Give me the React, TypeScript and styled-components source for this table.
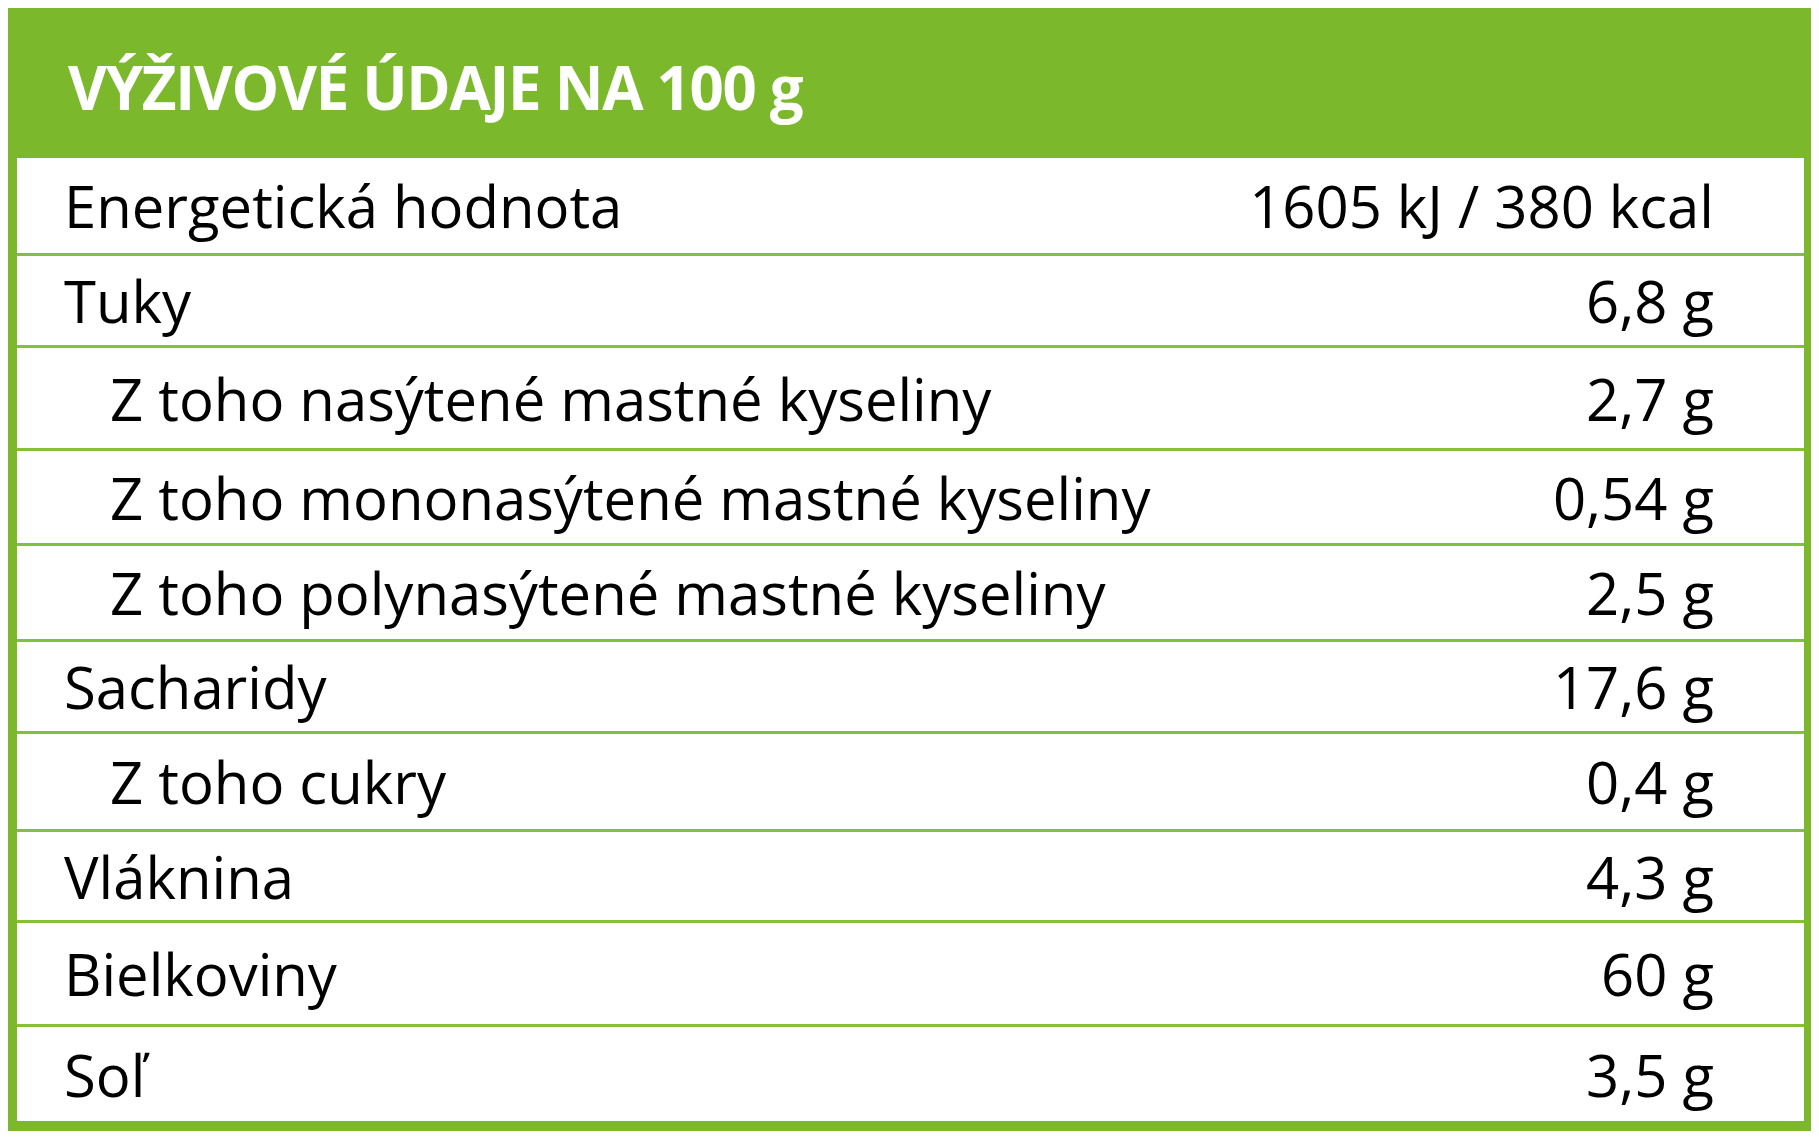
import React from "react";
import styled, { createGlobalStyle } from "styled-components";

interface NutrientRow {
  label: string;
  value: string;
  sub?: boolean;
  height: number;
}

const rows: NutrientRow[] = [
  { label: "Energetická hodnota", value: "1605 kJ / 380 kcal", height: 98 },
  { label: "Tuky", value: "6,8 g", height: 92 },
  { label: "Z toho nasýtené mastné kyseliny", value: "2,7 g", sub: true, height: 103 },
  { label: "Z toho mononasýtené mastné kyseliny", value: "0,54 g", sub: true, height: 95 },
  { label: "Z toho polynasýtené mastné kyseliny", value: "2,5 g", sub: true, height: 96 },
  { label: "Sacharidy", value: "17,6 g", height: 92 },
  { label: "Z toho cukry", value: "0,4 g", sub: true, height: 98 },
  { label: "Vláknina", value: "4,3 g", height: 91 },
  { label: "Bielkoviny", value: "60 g", height: 104 },
  { label: "Soľ", value: "3,5 g", height: 94 },
];

const GlobalStyle = createGlobalStyle`
  body {
    margin: 8px;
    background: #fff;
    font-family: "Open Sans", "Noto Sans", sans-serif;
  }
`;

const App = () => {
  return (
    <>
      <GlobalStyle />
      <Table>
        <Header>
          <Title>VÝŽIVOVÉ ÚDAJE NA 100 g</Title>
        </Header>
        {rows.map((r) => (
          <Row key={r.label} $height={r.height}>
            <Label $sub={r.sub}>{r.label}</Label>
            <Value>{r.value}</Value>
          </Row>
        ))}
      </Table>
    </>
  );
};

const Table = styled.div`
  width: 1805px;
  box-sizing: border-box;
  border: 9px solid #7bb82c;
  border-top: none;
  border-bottom-width: 10px;
  background: #fff;
`;
const Header = styled.div`
  height: 150px;
  margin: 0 -9px;
  padding-left: 60px;
  background: #7bb82c;
  display: flex;
  align-items: center;
`;
const Title = styled.h1`
  margin: 0;
  padding-top: 8px;
  font-size: 60px;
  font-weight: 700;
  letter-spacing: -1.3px;
  color: #fff;
`;
const Row = styled.div<{ $height: number }>`
  height: ${(p) => p.$height}px;
  box-sizing: border-box;
  display: flex;
  align-items: center;
  justify-content: space-between;
  padding: 0 90px 0 47px;
  border-bottom: 3px solid #85c03c;
  font-size: 58px;
  color: #000;
  &:last-child {
    border-bottom: none;
  }
`;
const Label = styled.span<{ $sub?: boolean }>`
  padding-left: ${(p) => (p.$sub ? 46 : 0)}px;
`;
const Value = styled.span``;

export default App;
